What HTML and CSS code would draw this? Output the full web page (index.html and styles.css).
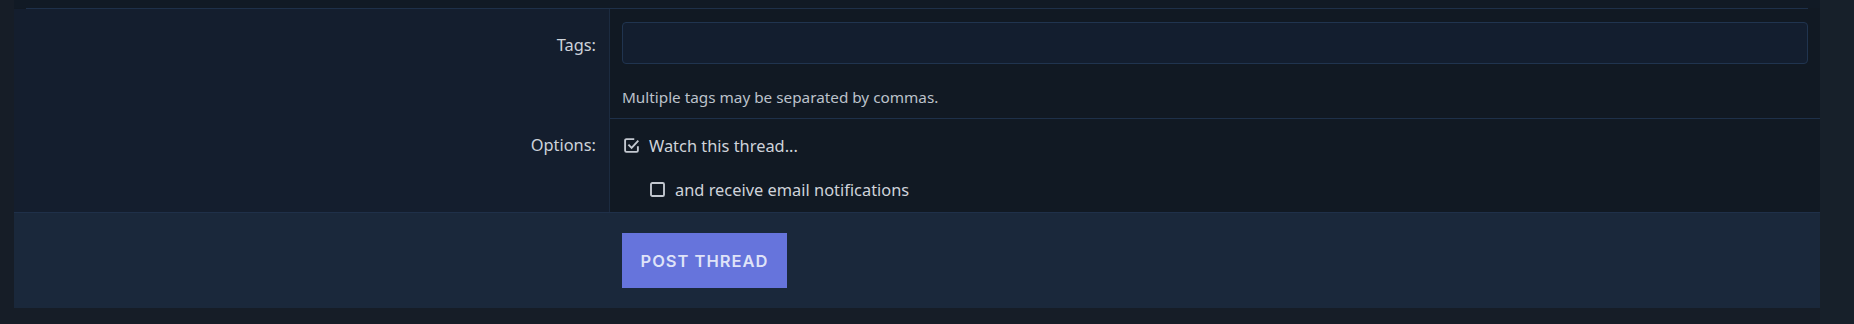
FILE: index.html
```html
<!DOCTYPE html>
<html lang="en">
<head>
<meta charset="utf-8">
<title>Post thread</title>
<link rel="stylesheet" href="styles.css">
</head>
<body>
<div class="page">
  <form class="panel">
    <div class="row-prev"></div>
    <div class="row-sep"></div>
    <div class="form-row form-row--tags">
      <div class="label-col"><label class="label" for="tags">Tags:</label></div>
      <div class="field-col">
        <input class="input" id="tags" type="text">
        <div class="explain">Multiple tags may be separated by commas.</div>
      </div>
    </div>
    <div class="form-row form-row--options">
      <div class="label-col"><span class="label">Options:</span></div>
      <div class="field-col">
        <div class="choice">
          <svg class="box" viewBox="1.2 1.2 13.6 13.6" width="15" height="15" aria-hidden="true">
            <path d="M10.5 2.2H3.4a1.2 1.2 0 0 0-1.2 1.2v9.2a1.2 1.2 0 0 0 1.2 1.2h9.2a1.2 1.2 0 0 0 1.2-1.2V8.6" fill="none" stroke="currentColor" stroke-width="1.7"/>
            <path d="M5.2 7.2l2.9 2.9 6.1-6.6" fill="none" stroke="currentColor" stroke-width="1.7"/>
          </svg>
          <span>Watch this thread...</span>
        </div>
        <div class="choice choice--sub">
          <svg class="box" viewBox="1.2 1.2 13.6 13.6" width="15" height="15" aria-hidden="true">
            <rect x="2.1" y="2.1" width="11.8" height="11.8" rx="1.2" fill="none" stroke="currentColor" stroke-width="1.7"/>
          </svg>
          <span>and receive email notifications</span>
        </div>
      </div>
    </div>
    <div class="form-submit">
      <div class="submit-spacer"></div>
      <div class="submit-field">
        <button class="button" type="button">POST THREAD</button>
      </div>
    </div>
  </form>
  <div class="scroll-strip"></div>
</div>
</body>
</html>
```

FILE: styles.css
```css
* { box-sizing: border-box; }
html, body { margin: 0; padding: 0; }
body {
  background: #161d27;
  font-family: "Noto Sans", "Open Sans", sans-serif;
  color: #c9ced6;
  width: 1854px;
  height: 324px;
  overflow: hidden;
}
.page {
  display: flex;
  padding-left: 14px;
  height: 324px;
}
.panel {
  width: 1806px;
  display: flex;
  flex-direction: column;
  align-self: flex-start;
  background: #111923;
}
.scroll-strip {
  flex: 1;
  background: #17202a;
}
.row-prev {
  height: 8px;
  background: #111a25;
}
.row-sep {
  height: 1px;
  margin: 0 12px;
  background: #1e3049;
}
.form-row {
  display: grid;
  grid-template-columns: 596px 1fr;
}
.label-col {
  background: #141e2e;
  border-right: 1px solid #1c2b40;
  text-align: right;
  padding-right: 13px;
}
.label {
  font-size: 16.4px;
  line-height: 22px;
  color: #cdd2da;
}
.form-row--tags .label-col { padding-top: 25px; }
.form-row--tags .field-col {
  padding: 13px 12px 11px;
  border-bottom: 1px solid #1e3049;
}
.input {
  display: block;
  width: 100%;
  height: 42px;
  background: #131e2f;
  border: 1px solid #20344f;
  border-radius: 4px;
  outline: none;
}
.explain {
  margin-top: 23px;
  font-size: 15.3px;
  line-height: 20px;
  color: #bcc2cb;
}
.form-row--options .label-col { padding-top: 15px; }
.form-row--options .field-col {
  padding: 14px 12px 11px 14px;
}
.choice {
  display: flex;
  align-items: center;
  gap: 10px;
  height: 24px;
  font-size: 16.4px;
  color: #cfd3da;
}
.choice--sub {
  margin-top: 20px;
  padding-left: 26px;
}
.box { color: #c3c8d0; flex: none; }
.form-submit {
  display: grid;
  grid-template-columns: 596px 1fr;
  background: #1a283b;
  border-top: 1px solid #1f3049;
}
.submit-field {
  padding: 20px 12px 20px;
}
.button {
  display: block;
  width: 165px;
  height: 55px;
  border: 0;
  border-radius: 0;
  background: #6674dc;
  color: #dfe3f8;
  font-family: "Inter", "Noto Sans", sans-serif;
  font-weight: 600;
  font-size: 16.5px;
  letter-spacing: 1px;
  padding: 0;
}
```
